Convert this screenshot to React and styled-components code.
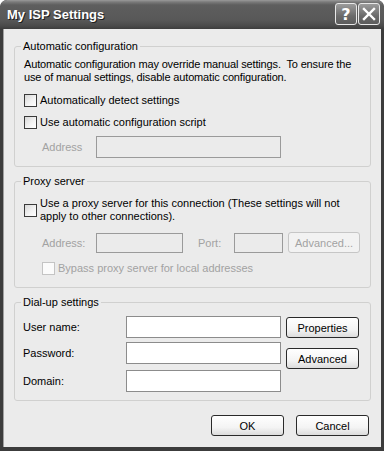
import React from "react";
import styled, { createGlobalStyle } from "styled-components";

const Global = createGlobalStyle`
  html, body { margin: 0; padding: 0; background: #ffffff; }
  body { font-family: "Liberation Sans", Arial, sans-serif; font-size: 11px; color: #000; }
  * { box-sizing: border-box; }
`;

const Window = styled.div`
  width: 384px;
  height: 451px;
  display: flex;
  flex-direction: column;
  background: #3c3c3c;
  border-radius: 7px 7px 0 0;
  overflow: hidden;
  padding: 0 3px 4px 3px;
`;

const TitleBar = styled.div`
  height: 29px;
  margin: 0 -3px;
  flex: none;
  display: flex;
  align-items: center;
  padding: 0 4px 1px 7px;
  background: linear-gradient(#9a9a9a 0px, #7a7a7a 2px, #5e5e5e 5px, #585858 20px, #4a4a4a 26px, #3c3c3c 29px);
  border-radius: 7px 7px 0 0;
`;

const Title = styled.div`
  flex: 1;
  color: #fff;
  font-family: "Liberation Sans", Arial, sans-serif;
  font-weight: bold;
  font-size: 13px;
  text-shadow: 1px 1px 0 #1e1e1e;
`;

const CapButton = styled.div`
  width: 22px;
  height: 22px;
  margin-left: 1px;
  border: 1px solid #e8e8e8;
  border-radius: 3px;
  background: linear-gradient(#9c9c9c, #6a6a6a 60%, #5c5c5c);
  display: flex;
  align-items: center;
  justify-content: center;
  color: #fff;
  font-family: "DejaVu Sans", sans-serif;
  font-weight: bold;
  font-size: 16px;
`;

const Body = styled.div`
  flex: 1;
  background: #ebebeb;
  border-left: 1px solid #a0a0a0;
  display: flex;
  flex-direction: column;
  padding: 11px 10px 0 10px;
`;

const Group = styled.fieldset`
  margin: 0;
  min-width: 0;
  border: 1px solid #d0d0cf;
  border-radius: 3px;
  padding: ${p => p.$pad || "5px 9px 8px 9px"};
  & + & { margin-top: ${p => p.$gap || 7}px; }
`;

const Legend = styled.legend`
  padding: 0 2px;
  margin-left: -3px;
  line-height: 13px;
  color: #000;
`;

const Text = styled.div`
  line-height: 13px;
  white-space: nowrap;
  letter-spacing: ${p => p.$ls || 0}px;
  margin-top: ${p => p.$mt || 0}px;
`;

const CheckRow = styled.label`
  display: flex;
  align-items: center;
  gap: 3px;
  margin-top: ${p => p.$mt || 0}px;
  margin-left: ${p => p.$ml || 0}px;
  line-height: 13px;
  color: ${p => (p.$disabled ? "#a2a2a2" : "#000")};
`;

const Box = styled.span`
  flex: none;
  width: 13px;
  height: 13px;
  border: 1px solid ${p => (p.$disabled ? "#c4c4c4" : "#3a3a3a")};
  background: ${p => (p.$disabled ? "#fbfbfb" : "linear-gradient(135deg, #d8d8d8, #f4f4f4 60%, #ffffff)")};
`;

const FieldRow = styled.div`
  display: flex;
  align-items: center;
  margin-top: ${p => p.$mt || 0}px;
  margin-left: ${p => p.$ml || 0}px;
`;

const FieldLabel = styled.span`
  width: ${p => p.$w}px;
  flex: none;
  margin-left: ${p => p.$ml || 0}px;
  color: ${p => (p.$disabled ? "#a2a2a2" : "#000")};
`;

const Input = styled.div`
  flex: none;
  width: ${p => p.$w}px;
  height: ${p => p.$h || 22}px;
  border: 1px solid ${p => (p.$disabled ? "#9a9a9a" : "#8c8c8c")};
  background: ${p => (p.$disabled ? "#ebebeb" : "#ffffff")};
  margin-left: ${p => p.$ml || 0}px;
`;

const Button = styled.button`
  flex: none;
  width: ${p => p.$w || 73}px;
  height: ${p => p.$h || 21}px;
  margin: 0;
  margin-left: ${p => p.$ml || 0}px;
  padding: 0;
  font-family: "Liberation Sans", Arial, sans-serif;
  font-size: 11px;
  border: 1px solid ${p => (p.$disabled ? "#c6c6c6" : "#2a2a2a")};
  border-radius: 3px;
  color: ${p => (p.$disabled ? "#a2a2a2" : "#000")};
  background: ${p => (p.$disabled ? "#f2f2f2" : "linear-gradient(#ffffff, #f4f4f4 60%, #dcdcdc)")};
`;

const DialRow = styled.div`
  display: flex;
`;

const DialFields = styled.div`
  display: flex;
  flex-direction: column;
  gap: 4px;
  & > :last-child { margin-top: 2px; }
`;

const DialButtons = styled.div`
  display: flex;
  flex-direction: column;
  gap: 10px;
  padding-top: 1px;
  margin-left: 5px;
`;

const Footer = styled.div`
  display: flex;
  justify-content: flex-end;
  gap: 12px;
  margin-top: 14px;
  padding-right: 2px;
`;

export default function App() {
  return (
    <>
      <Global />
      <Window>
        <TitleBar>
          <Title>My ISP Settings</Title>
          <CapButton>?</CapButton>
          <CapButton>
            <svg width="14" height="14" viewBox="0 0 14 14">
              <path d="M2 2 L12 12 M12 2 L2 12" stroke="#fff" strokeWidth="2.4" strokeLinecap="square" />
            </svg>
          </CapButton>
        </TitleBar>
        <Body>
          <Group>
            <Legend>Automatic configuration</Legend>
            <Text $ls={-0.15}>
              Automatic configuration may override manual settings.&nbsp; To ensure the
              <br />
              use of manual settings, disable automatic configuration.
            </Text>
            <CheckRow $mt={10}>
              <Box />
              Automatically detect settings
            </CheckRow>
            <CheckRow $mt={9}>
              <Box />
              Use automatic configuration script
            </CheckRow>
            <FieldRow $mt={7} $ml={18}>
              <FieldLabel $w={54} $disabled>Address</FieldLabel>
              <Input $w={185} $disabled />
            </FieldRow>
          </Group>
          <Group $pad="9px 9px 12px 9px">
            <Legend>Proxy server</Legend>
            <CheckRow>
              <Box />
              <Text>
                Use a proxy server for this connection (These settings will not
                <br />
                apply to other connections).
              </Text>
            </CheckRow>
            <FieldRow $mt={9} $ml={18}>
              <FieldLabel $w={54} $disabled>Address:</FieldLabel>
              <Input $w={87} $h={20} $disabled />
              <FieldLabel $w={36} $ml={15} $disabled>Port:</FieldLabel>
              <Input $w={49} $h={20} $disabled />
              <Button $w={72} $h={21} $ml={5} $disabled>Advanced...</Button>
            </FieldRow>
            <CheckRow $mt={9} $ml={18} $disabled>
              <Box $disabled />
              Bypass proxy server for local addresses
            </CheckRow>
          </Group>
          <Group $pad="7px 9px 8px 9px" $gap={8}>
            <Legend>Dial-up settings</Legend>
            <DialRow>
              <DialFields>
                <FieldRow $ml={-1}>
                  <FieldLabel $w={103}>User name:</FieldLabel>
                  <Input $w={155} />
                </FieldRow>
                <FieldRow $ml={-1}>
                  <FieldLabel $w={103}>Password:</FieldLabel>
                  <Input $w={155} />
                </FieldRow>
                <FieldRow $ml={-1}>
                  <FieldLabel $w={103}>Domain:</FieldLabel>
                  <Input $w={155} />
                </FieldRow>
              </DialFields>
              <DialButtons>
                <Button $w={73}>Properties</Button>
                <Button $w={73}>Advanced</Button>
              </DialButtons>
            </DialRow>
          </Group>
          <Footer>
            <Button>OK</Button>
            <Button>Cancel</Button>
          </Footer>
        </Body>
      </Window>
    </>
  );
}
